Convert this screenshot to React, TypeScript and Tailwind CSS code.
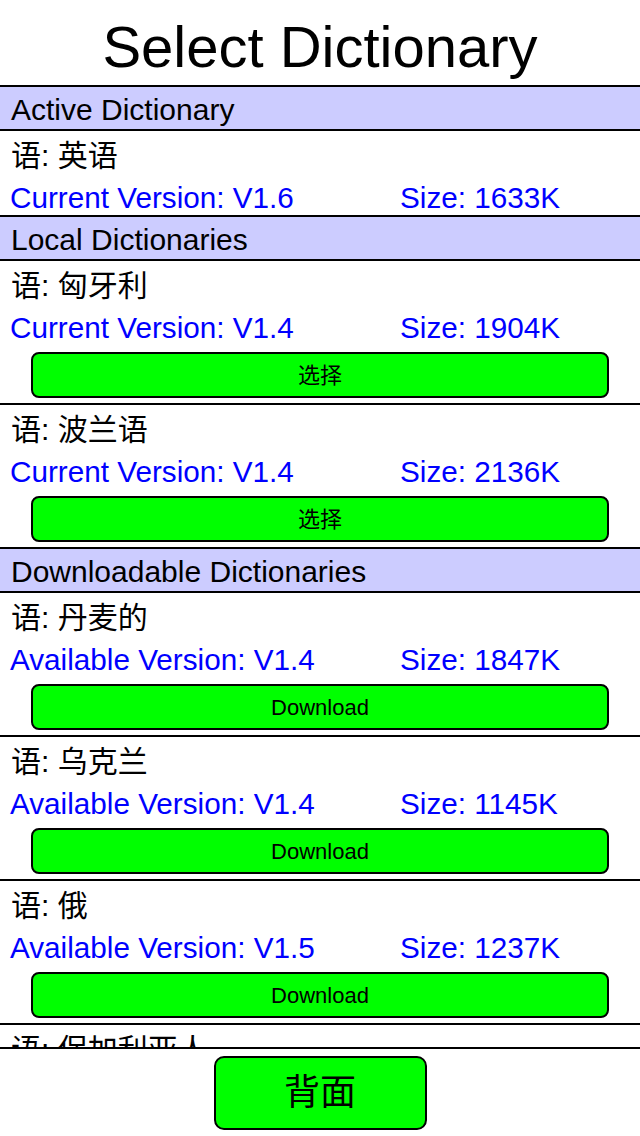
import React from "react";

type Dict = { lang: string; label?: string; version?: string; size?: string; action?: string };

const font = { fontFamily: '"Liberation Sans", "Noto Sans CJK SC", sans-serif' };

function SectionHeader({ title }: { title: string }) {
  return (
    <div className="h-[44px] shrink-0 bg-[#ccccff] border-b-2 border-black pl-[11px] pt-[3px] text-[30px] leading-[39px] text-black">
      {title}
    </div>
  );
}

function DictRow({ d }: { d: Dict }) {
  return (
    <div className="shrink-0 border-b-2 border-black">
      <div className="h-[46px] pl-[11px] pt-[3px] text-[30px] leading-[43px] text-black">语: {d.lang}</div>
      {d.label && (
        <div className="h-[38px] flex pl-[10px] pt-[3px] text-[29.7px] leading-[35px] text-[#0000ff]">
          <div className="w-[390px]">
            {d.label}: {d.version}
          </div>
          <div>Size: {d.size}</div>
        </div>
      )}
      {d.action && (
        <div className="pt-[7px] pb-[5px] flex justify-center">
          <button className="w-[578px] h-[46px] bg-[#00ff00] border-2 border-black rounded-[8px] text-[22px] text-black">
            {d.action}
          </button>
        </div>
      )}
    </div>
  );
}

export default function App() {
  const local: Dict[] = [
    { lang: "匈牙利", label: "Current Version", version: "V1.4", size: "1904K", action: "选择" },
    { lang: "波兰语", label: "Current Version", version: "V1.4", size: "2136K", action: "选择" },
  ];
  const downloadable: Dict[] = [
    { lang: "丹麦的", label: "Available Version", version: "V1.4", size: "1847K", action: "Download" },
    { lang: "乌克兰", label: "Available Version", version: "V1.4", size: "1145K", action: "Download" },
    { lang: "俄", label: "Available Version", version: "V1.5", size: "1237K", action: "Download" },
    // last entry is scrolled past the bottom, only its label peeks out
    { lang: "保加利亚人" },
  ];

  return (
    <div className="w-[640px] h-[1136px] bg-white flex flex-col overflow-hidden" style={font}>
      {/* Title */}
      <div className="h-[87px] shrink-0 border-b-2 border-black flex items-center justify-center text-[58px] text-black pt-[8px]">
        Select Dictionary
      </div>

      {/* Scrolling list */}
      <div className="flex-1 overflow-hidden flex flex-col">
        <SectionHeader title="Active Dictionary" />
        <DictRow d={{ lang: "英语", label: "Current Version", version: "V1.6", size: "1633K" }} />
        <SectionHeader title="Local Dictionaries" />
        {local.map((d) => (
          <DictRow key={d.lang} d={d} />
        ))}
        <SectionHeader title="Downloadable Dictionaries" />
        {downloadable.map((d) => (
          <DictRow key={d.lang} d={d} />
        ))}
      </div>

      {/* Bottom bar */}
      <div className="h-[89px] shrink-0 border-t-2 border-black flex items-center justify-center">
        <button className="w-[213px] h-[74px] bg-[#00ff00] border-2 border-black rounded-[10px] text-[36px] text-black">
          背面
        </button>
      </div>
    </div>
  );
}
